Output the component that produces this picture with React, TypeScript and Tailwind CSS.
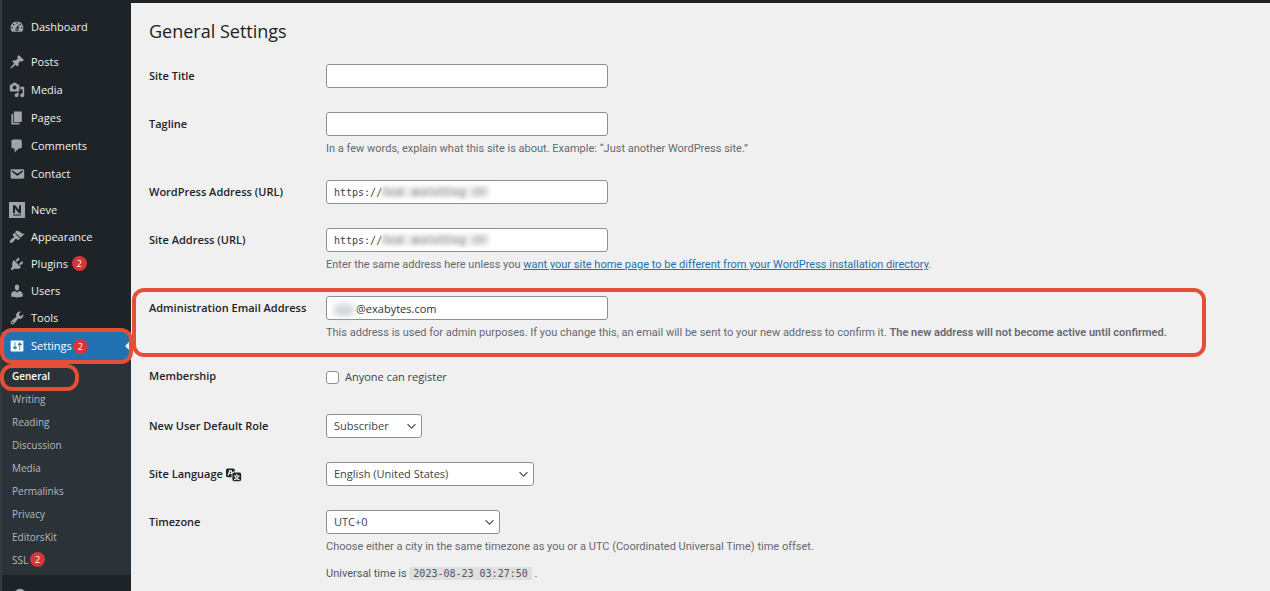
import type { ReactNode } from 'react'

const paths = {
  dashboard:
    'M3.76 16h12.48c1.1-1.37 1.76-3.11 1.76-5 0-4.42-3.58-8-8-8s-8 3.58-8 8c0 1.89.66 3.63 1.76 5zM10 4c.55 0 1 .45 1 1s-.45 1-1 1-1-.45-1-1 .45-1 1-1zM6 6c.55 0 1 .45 1 1s-.45 1-1 1-1-.45-1-1 .45-1 1-1zm8 0c.55 0 1 .45 1 1s-.45 1-1 1-1-.45-1-1 .45-1 1-1zm-5.37 5.55L12 7v6c0 1.1-.9 2-2 2s-2-.9-2-2c0-.57.24-1.08.63-1.45zM4 10c.55 0 1 .45 1 1s-.45 1-1 1-1-.45-1-1 .45-1 1-1zm12 0c.55 0 1 .45 1 1s-.45 1-1 1-1-.45-1-1 .45-1 1-1zm-5 3c0-.55-.45-1-1-1s-1 .45-1 1 .45 1 1 1 1-.45 1-1z',
  posts:
    'M10.44 3.02l1.82-1.82 6.36 6.35-1.83 1.82c-1.05-.68-2.48-.57-3.41.36l-.75.75c-.92.93-1.04 2.35-.35 3.41l-1.83 1.82-2.41-2.41-2.8 2.79c-.42.42-3.38 2.71-3.8 2.29s1.86-3.39 2.28-3.81l2.79-2.79L4.1 9.36l1.83-1.82c1.05.69 2.48.57 3.4-.36l.75-.75c.93-.92 1.05-2.35.36-3.41z',
  media:
    'M13 11V4c0-.55-.45-1-1-1h-1.67L9 1H5L3.67 3H2c-.55 0-1 .45-1 1v7c0 .55.45 1 1 1h10c.55 0 1-.45 1-1zM7 4.5c1.38 0 2.5 1.12 2.5 2.5S8.38 9.5 7 9.5 4.5 8.38 4.5 7 5.62 4.5 7 4.5zM14 6h5v10.5c0 1.38-1.12 2.5-2.5 2.5S14 17.88 14 16.5s1.12-2.5 2.5-2.5c.17 0 .34.02.5.05V9h-3V6zm-4 8.05V13h2v3.5c0 1.38-1.12 2.5-2.5 2.5S7 17.88 7 16.5 8.12 14 9.5 14c.17 0 .34.02.5.05z',
  pages: 'M6 15V2h10v13H6zm-1 1h8v2H3V5h2v11z',
  comments:
    'M5 2h9c1.1 0 2 .9 2 2v7c0 1.1-.9 2-2 2h-2l-5 5v-5H5c-1.1 0-2-.9-2-2V4c0-1.1.9-2 2-2z',
  contact:
    'M3.87 4h13.25C18.37 4 19 4.59 19 5.79v8.42c0 1.19-.63 1.79-1.88 1.79H3.87c-1.25 0-1.88-.6-1.88-1.79V5.79c0-1.2.63-1.79 1.88-1.79zm6.62 8.6l6.74-5.53c.24-.2.43-.66.13-1.07-.29-.41-.82-.42-1.17-.17l-5.7 3.86L4.8 5.83c-.35-.25-.88-.24-1.17.17-.3.41-.11.87.13 1.07z',
  neve: 'M0 0h20v20H0zM5 4v10h2.5V8.2l4.8 5.8H15V4h-2.5v5.8L7.7 4zM5 15.5V17h10v-1.500z',
  appearance:
    'M14.48 11.06L7.41 3.99l1.5-1.5c.5-.56 2.3-.47 3.51.32 1.21.8 1.43 1.28 2.91 2.1 1.18.64 2.45 1.26 4.45.85zm-.71.71L6.7 4.7 4.93 6.47c-.39.39-.39 1.02 0 1.41l1.06 1.06c.39.39.39 1.03 0 1.42-.6.6-1.43 1.11-2.21 1.69-.35.26-.7.53-1.01.84C1.43 14.23.4 16.08 1.4 17.07c.99 1 2.84-.03 4.18-1.36.31-.31.58-.66.85-1.02.57-.78 1.08-1.61 1.69-2.21.39-.39 1.02-.39 1.41 0l1.06 1.06c.39.39 1.02.39 1.41 0z',
  plugins:
    'M13.11 4.36L9.87 7.6 8 5.73l3.24-3.24c.35-.34 1.05-.2 1.56.32.52.51.66 1.21.31 1.55zm-8 1.77l.91-1.12 9.01 9.01-1.19.84c-.71.71-2.63 1.16-3.82 1.16H6.14L4.9 17.26c-.59.59-1.54.59-2.12 0-.59-.58-.59-1.53 0-2.12l1.24-1.24v-3.88c0-1.13.4-3.19 1.09-3.89zm7.26 3.97l3.24-3.24c.34-.35 1.04-.21 1.55.31.52.51.66 1.21.31 1.55l-3.24 3.25z',
  users:
    'M10 9.25c-2.27 0-2.73-3.44-2.73-3.44C7 4.02 7.82 2 9.97 2c2.16 0 2.98 2.02 2.71 3.81 0 0-.41 3.44-2.68 3.44zm0 2.57L12.72 10c2.39 0 4.52 2.33 4.52 4.53v2.49s-3.65 1.13-7.24 1.13c-3.65 0-7.24-1.13-7.24-1.13v-2.49c0-2.25 1.94-4.48 4.47-4.48z',
  tools:
    'M16.68 9.77c-1.34 1.34-3.3 1.67-4.95.99l-5.41 6.52c-.99.99-2.59.99-3.58 0s-.99-2.59 0-3.57l6.52-5.42c-.68-1.65-.35-3.61.99-4.95 1.28-1.28 3.12-1.62 4.72-1.06l-2.89 2.89 2.82 2.82 2.86-2.87c.53 1.58.18 3.39-1.08 4.65zM3.81 16.21c.4.39 1.04.39 1.43 0 .4-.4.4-1.04 0-1.43-.39-.4-1.03-.4-1.43 0-.39.39-.39 1.03 0 1.43z',
  settings:
    'M18 16V4c0-.55-.45-1-1-1H3c-.55 0-1 .45-1 1v12c0 .55.45 1 1 1h14c.55 0 1-.45 1-1zM8 11h1c.55 0 1 .45 1 1s-.45 1-1 1H8v1.500c0 .28-.22.5-.5.5s-.5-.22-.5-.5V13H6c-.55 0-1-.45-1-1s.45-1 1-1h1V5.500c0-.28.22-.5.5-.5s.5.22.5.5V11zm5-2h-1c-.55 0-1-.45-1-1s.45-1 1-1h1V5.500c0-.28.22-.5.5-.5s.5.22.5.5V7h1c.55 0 1 .45 1 1s-.45 1-1 1h-1v5.500c0 .28-.22.5-.5.5s-.5-.22-.5-.5V9z',
  translation:
    'M11 7H9.49c-.63 0-1.25.3-1.59.7L7 5H4.13l-2.39 7h1.69l.74-2H7v4H2c-1.1 0-2-.9-2-2V5c0-1.1.9-2 2-2h7c1.1 0 2 .9 2 2v2zM6.51 9H4.49l1-2.93zM10 8h7c1.1 0 2 .9 2 2v7c0 1.1-.9 2-2 2h-7c-1.1 0-2-.9-2-2v-7c0-1.1.9-2 2-2zm7.25 5v-1.08h-3.17V9.75h-1.16v2.17H9.75V13h1.28c.11.85.56 1.85 1.28 2.62-.87.36-1.89.62-2.31.62-.01.02.22.97.2 1.46.84 0 2.21-.5 3.28-1.15 1.09.65 2.48 1.15 3.34 1.15-.02-.49.2-1.44.2-1.46-.43 0-1.49-.27-2.38-.63.7-.77 1.14-1.77 1.25-2.61h1.36zm-3.81 1.93c-.5-.46-.85-1.13-1.01-1.93h2.09c-.17.8-.51 1.47-1 1.93l-.04.03s-.03-.02-.04-.03z',
  collapse: 'M10 2.200A8 8 0 1 0 10 18.200A8 8 0 1 0 10 2.200zM12 6v8l-5-4z',
}

type IconName = keyof typeof paths

function Icon({ name, className }: { name: IconName; className: string }) {
  return (
    <svg viewBox="0 0 20 20" fill="currentColor" fillRule="evenodd" aria-hidden="true" className={className}>
      <path d={paths[name]} />
    </svg>
  )
}

function Count({ value }: { value: number }) {
  return (
    <span className="flex size-[15px] items-center justify-center rounded-full bg-[#d63638] text-[9px] leading-none text-white">
      {value}
    </span>
  )
}

type Item = { label: string; icon: IconName; count?: number }

const contentItems: Item[] = [
  { label: 'Posts', icon: 'posts' },
  { label: 'Media', icon: 'media' },
  { label: 'Pages', icon: 'pages' },
  { label: 'Comments', icon: 'comments' },
  { label: 'Contact', icon: 'contact' },
]

const adminItems: Item[] = [
  { label: 'Neve', icon: 'neve' },
  { label: 'Appearance', icon: 'appearance' },
  { label: 'Plugins', icon: 'plugins', count: 2 },
  { label: 'Users', icon: 'users' },
  { label: 'Tools', icon: 'tools' },
]

const subItems = ['Writing', 'Reading', 'Discussion', 'Media', 'Permalinks', 'Privacy', 'EditorsKit']

function MenuItem({ label, icon, count }: Item) {
  return (
    <li>
      <a href="#" className="flex h-[27px] items-center gap-[6px] pl-[7px] text-[#f0f0f1]">
        <Icon name={icon} className="size-4 shrink-0 text-[#a0a5aa]" />
        <span className="flex items-center gap-1">
          {label}
          {count && <Count value={count} />}
        </span>
      </a>
    </li>
  )
}

function Sidebar() {
  return (
    <nav
      aria-label="Main menu"
      className="w-[131px] shrink-0 border-l-2 border-[#343b40] bg-[#1d2327] pt-[13px] text-[11px] leading-4"
    >
      <ul>
        <MenuItem label="Dashboard" icon="dashboard" />
      </ul>
      <ul className="mt-2 flex flex-col gap-px">
        {contentItems.map((item) => (
          <MenuItem key={item.label} {...item} />
        ))}
      </ul>
      <ul className="mt-[9px]">
        {adminItems.map((item) => (
          <MenuItem key={item.label} {...item} />
        ))}
        <li className="mt-px">
          <a href="#" className="relative flex h-7 items-center gap-[6px] bg-[#2271b1] pl-[7px] text-white">
            <Icon name="settings" className="size-4 shrink-0" />
            <span className="flex items-center gap-px">
              Settings
              <Count value={2} />
            </span>
            <span className="absolute top-1/2 right-0 size-0 -translate-y-1/2 border-y-[6px] border-r-[6px] border-y-transparent border-r-[#f0f0f1]" />
            <span className="pointer-events-none absolute -inset-x-0.5 -inset-y-1 z-10 rounded-xl border-4 border-[#e64f37]" />
          </a>
          <ul className="bg-[#2c3338] pt-1 pb-1 text-[10px] text-[#b4b9be]">
            <li>
              <a href="#" className="relative flex h-[23px] items-center pl-[10px] font-semibold text-white">
                General
                <span className="pointer-events-none absolute top-0 -bottom-1 -left-0.5 z-10 w-[79px] rounded-xl border-4 border-[#e64f37]" />
              </a>
            </li>
            {subItems.map((label) => (
              <li key={label}>
                <a href="#" className="flex h-[23px] items-center pl-[10px]">
                  {label}
                </a>
              </li>
            ))}
            <li>
              <a href="#" className="flex h-[23px] items-center gap-0.5 pl-[10px]">
                SSL
                <Count value={2} />
              </a>
            </li>
          </ul>
        </li>
      </ul>
      <button type="button" aria-label="Collapse menu" className="mt-3 block pl-[10px] text-[#a0a5aa]">
        <Icon name="collapse" className="size-4" />
      </button>
    </nav>
  )
}

const inputClass =
  'block h-6 w-[282px] rounded-[3px] border border-[#8c8f94] bg-white px-[7px] text-[11px] text-[#2c3338]'

function Row({ label, htmlFor, children }: { label: ReactNode; htmlFor: string; children: ReactNode }) {
  return (
    <div className="grid grid-cols-[177px_minmax(0,1fr)]">
      <label htmlFor={htmlFor} className="flex h-6 items-center gap-[3px] font-semibold text-[#1d2327]">
        {label}
      </label>
      <div>{children}</div>
    </div>
  )
}

function Description({ children }: { children: ReactNode }) {
  return (
    <p className="mt-[5px] font-['Roboto','Open_Sans',sans-serif] leading-[15px] text-[#646970]">{children}</p>
  )
}

function Select({ id, value, className }: { id: string; value: string; className: string }) {
  return (
    <div className={`relative ${className}`}>
      <select
        id={id}
        defaultValue={value}
        className="h-6 w-full appearance-none rounded-[3px] border border-[#8c8f94] bg-white pr-6 pl-[7px] text-[11px] text-[#3c434a]"
      >
        <option>{value}</option>
      </select>
      <svg
        viewBox="0 0 20 20"
        aria-hidden="true"
        className="pointer-events-none absolute top-[6px] right-1 size-[13px] fill-[#555]"
      >
        <path d="M5 6l5 5 5-5 2 1-7 7-7-7 2-1z" />
      </svg>
    </div>
  )
}

const smudges = [
  [3, 5, 3, 9], [8, 7, 5, 7], [15, 7, 5, 7], [21, 5, 3, 9],
  [33, 7, 8, 7], [43, 7, 5, 7], [50, 5, 3, 9], [55, 7, 4, 7], [61, 5, 3, 9],
  [66, 5, 3, 9], [71, 5, 3, 9], [76, 7, 5, 7], [83, 7, 5, 9], [97, 6, 3, 8], [102, 5, 4, 9], [109, 4, 2, 10],
]

function UrlInput({ id }: { id: string }) {
  return (
    <div className="relative w-[282px]">
      <input
        id={id}
        type="text"
        defaultValue="https://"
        className="block h-6 w-full rounded-[3px] border border-[#8c8f94] bg-white px-[7px] font-['DejaVu_Sans_Mono','Liberation_Mono',monospace] text-[10px] text-[#3c434a]"
      />
      <svg
        viewBox="0 0 116 20"
        aria-hidden="true"
        className="pointer-events-none absolute top-0.5 left-[54px] h-5 w-[112px] blur-[2px]"
      >
        <rect x="2" y="4" width="110" height="12" fill="#ececec" />
        {smudges.map(([x, y, w, h]) => (
          <rect key={x} x={x} y={y} width={w} height={h} fill="#bcbcbc" />
        ))}
      </svg>
    </div>
  )
}

export default function App() {
  return (
    <div className="flex h-screen overflow-hidden bg-[#f0f0f0] font-['Open_Sans','Noto_Sans',sans-serif]">
      <Sidebar />
      <main className="min-w-0 flex-1 border-t-3 border-[#1d2327] pr-16 pl-[18px] text-[11px] text-[#3c434a]">
        <h1 className="pt-4 text-[18px] leading-6 text-[#1d2327]">General Settings</h1>
        <form className="mt-[21px] flex flex-col gap-6">
          <Row label="Site Title" htmlFor="title">
            <input id="title" type="text" className={inputClass} />
          </Row>
          <Row label="Tagline" htmlFor="tagline">
            <input id="tagline" type="text" className={inputClass} />
            <Description>
              In a few words, explain what this site is about. Example: “Just another WordPress site.”
            </Description>
          </Row>
          <Row label="WordPress Address (URL)" htmlFor="wpurl">
            <UrlInput id="wpurl" />
          </Row>
          <Row label="Site Address (URL)" htmlFor="siteurl">
            <UrlInput id="siteurl" />
            <Description>
              Enter the same address here unless you{' '}
              <a href="#" className="text-[#2271b1] underline">
                want your site home page to be different from your WordPress installation directory
              </a>
              .
            </Description>
          </Row>
          <div className="relative">
            <Row label="Administration Email Address" htmlFor="email">
              <div className="relative w-[282px]">
                <input
                  id="email"
                  type="text"
                  defaultValue="@exabytes.com"
                  className="block h-6 w-full rounded-[3px] border border-[#8c8f94] bg-white pr-[7px] pl-[29px] text-[11px] text-[#2c3338]"
                />
                <span className="pointer-events-none absolute top-2 left-2 h-3 w-5 rounded-sm bg-[#d4d5d8] blur-[3px]" />
              </div>
              <Description>
                This address is used for admin purposes. If you change this, an email will be sent to your new
                address to confirm it.{' '}
                <strong className="font-semibold">The new address will not become active until confirmed.</strong>
              </Description>
            </Row>
            <span className="pointer-events-none absolute -top-2 right-0 -bottom-[17px] -left-[17px] rounded-xl border-4 border-[#e64f37]" />
          </div>
          <Row label="Membership" htmlFor="register">
            <div className="flex h-[26px] items-center gap-[6px]">
              <input
                id="register"
                type="checkbox"
                className="size-[13px] appearance-none rounded-[3px] border border-[#8c8f94] bg-white"
              />
              <label htmlFor="register">Anyone can register</label>
            </div>
          </Row>
          <Row label="New User Default Role" htmlFor="role">
            <Select id="role" value="Subscriber" className="w-24" />
          </Row>
          <Row
            label={
              <>
                Site Language
                <Icon name="translation" className="size-4" />
              </>
            }
            htmlFor="language"
          >
            <Select id="language" value="English (United States)" className="w-52" />
          </Row>
          <Row label="Timezone" htmlFor="timezone">
            <Select id="timezone" value="UTC+0" className="w-[174px]" />
            <Description>
              Choose either a city in the same timezone as you or a UTC (Coordinated Universal Time) time offset.
            </Description>
            <p className="mt-3 font-['Roboto','Open_Sans',sans-serif] leading-4 text-[#50575e]">
              Universal time is{' '}
              <code className="bg-[#dfdfe0] px-1 py-px font-['DejaVu_Sans_Mono','Liberation_Mono',monospace] text-[10px]">
                2023-08-23 03:27:50
              </code>{' '}
              .
            </p>
          </Row>
        </form>
      </main>
    </div>
  )
}
